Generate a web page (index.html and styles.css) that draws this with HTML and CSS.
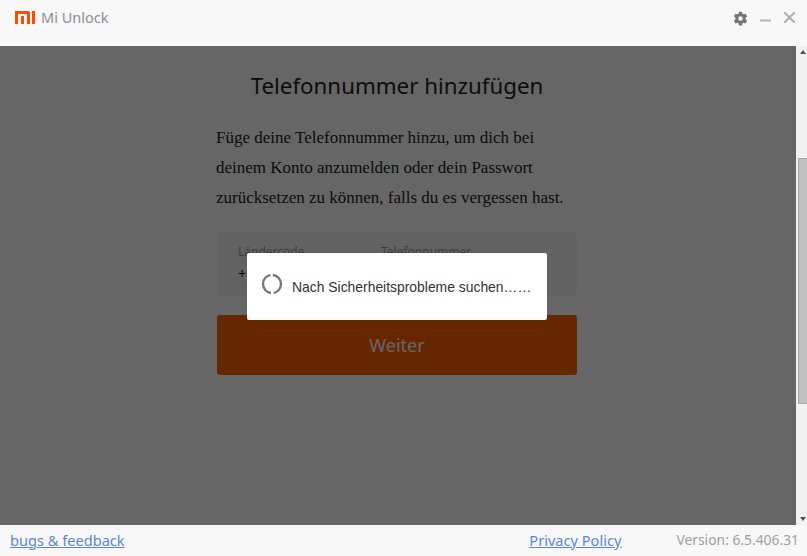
FILE: index.html
```html
<!DOCTYPE html>
<html lang="de">
<head>
    <meta charset="UTF-8">
    <meta name="viewport" content="width=device-width, initial-scale=1.0">
    <title>Mi Unlock</title>
    <link rel="stylesheet" href="styles.css">
</head>
<body>
    <header class="title-bar">
        <div class="brand">
            <svg class="mi-logo" width="20" height="13" viewBox="0 0 20 13">
                <path fill="#ff4a00" d="M0 0h13q2 0 2 2v11h-3V3H3v10H0zM6 5h3v8H6zM17 0h3v13h-3z"/>
            </svg>
            <span class="app-name">Mi Unlock</span>
        </div>
        <div class="window-buttons">
            <svg width="15" height="15" viewBox="0 0 24 24">
                <path fill="#757575" fill-rule="evenodd" d="M9.500 1h5l.7 3.300 1.700 1 3.200-1.100 2.500 4.300-2.500 2.300v2.400l2.500 2.300-2.500 4.300-3.200-1.100-1.700 1-.7 3.300h-5l-.7-3.300-1.700-1-3.200 1.100-2.500-4.300 2.500-2.300v-2.400L1.600 8.500l2.500-4.300 3.200 1.100 1.700-1zM12 8.500a3.500 3.500 0 1 0 0 7 3.500 3.500 0 0 0 0-7z"/>
            </svg>
            <svg width="11" height="11" viewBox="0 0 11 11">
                <path fill="#b4b4b4" d="M0 8.500h11v2H0z"/>
            </svg>
            <svg width="11" height="11" viewBox="0 0 11 11">
                <path stroke="#b0b0b0" stroke-width="2" d="M0 0l11 11M11 0L0 11"/>
            </svg>
        </div>
    </header>

    <div class="middle">
        <main class="content">
            <div class="form-column">
                <h1>Telefonnummer hinzufügen</h1>
                <p class="intro">Füge deine Telefonnummer hinzu, um dich bei deinem Konto anzumelden oder dein Passwort zurücksetzen zu können, falls du es vergessen hast.</p>
                <div class="phone-box">
                    <div class="country-field">
                        <label>Ländercode</label>
                        <span class="dial-code">+</span>
                    </div>
                    <div class="number-field">
                        <label>Telefonnummer</label>
                    </div>
                </div>
                <button class="next-button">Weiter</button>
            </div>
        </main>

        <div class="scrollbar">
            <span class="arrow-up"></span>
            <div class="track">
                <div class="thumb"></div>
            </div>
            <span class="arrow-down"></span>
        </div>

        <div class="overlay">
            <div class="dialog">
                <svg class="spinner" width="22" height="22" viewBox="0 0 22 22">
                    <circle cx="11" cy="11" r="9" fill="none" stroke="#777" stroke-width="2.400" stroke-dasharray="25.600 2.700" transform="rotate(-85 11 11)"/>
                </svg>
                <span>Nach Sicherheitsprobleme suchen……</span>
            </div>
        </div>
    </div>

    <footer class="status-bar">
        <a href="#">bugs &amp; feedback</a>
        <div class="footer-right">
            <a href="#">Privacy Policy</a>
            <span class="version">Version: 6.5.406.31</span>
        </div>
    </footer>
</body>
</html>
```

FILE: styles.css
```css
html, body {
    height: 100%;
}

body {
    margin: 0;
    height: 556px;
    display: flex;
    flex-direction: column;
    overflow: hidden;
    font-family: "Noto Sans", "Open Sans", Arial, sans-serif;
    background-color: #f8f8f8;
}

.title-bar {
    height: 46px;
    flex: none;
    display: flex;
    justify-content: space-between;
    padding: 11px 12px 0 15px;
    box-sizing: border-box;
    background-color: #f8f8f8;
}
.brand {
    display: flex;
    align-items: flex-start;
    gap: 6px;
}
.app-name {
    font-size: 14.500px;
    line-height: 13px;
    color: #8a8f98;
}
.window-buttons {
    display: flex;
    align-items: flex-start;
    gap: 13px;
}
.window-buttons svg:first-child {
    margin-right: -1px;
}
.window-buttons svg:last-child {
    margin-top: 1px;
}

.middle {
    position: relative;
    flex: 1;
    display: flex;
    min-height: 0;
}
.content {
    flex: 1;
    background-color: #fff;
    display: flex;
    justify-content: center;
}
.form-column {
    width: 360px;
    margin-right: 2px;
}
h1 {
    margin: 25px 0 0;
    font-size: 22.300px;
    line-height: 30px;
    font-weight: 400;
    color: #222;
    text-align: center;
}
.intro {
    margin: 22px 0 0 -1px;
    font-family: "Liberation Serif", "Times New Roman", serif;
    font-size: 17px;
    line-height: 30px;
    color: #222;
}
.phone-box {
    margin: 20px 0 0 1px;
    height: 62px;
    display: flex;
    box-sizing: border-box;
    padding: 11px 20px;
    background-color: #f4f4f4;
    border-radius: 3px;
}
.country-field {
    width: 143px;
}
label {
    display: block;
    font-size: 12px;
    line-height: 16px;
    color: #999;
}
.dial-code {
    display: block;
    margin-top: 6px;
    font-size: 14px;
    line-height: 16px;
    color: #111;
}
.next-button {
    display: block;
    width: 360px;
    height: 60px;
    margin-top: 20px;
    border: none;
    border-radius: 3px;
    background-color: #ff6200;
    color: #fff;
    font-family: inherit;
    font-size: 18px;
}

.scrollbar {
    width: 11px;
    flex: none;
    display: flex;
    flex-direction: column;
    align-items: center;
    background-color: #f1f1f1;
    z-index: 1;
}
.track {
    flex: 1;
    width: 100%;
    padding-top: 104px;
    box-sizing: border-box;
}
.thumb {
    height: 246px;
    margin-left: 2px;
    box-sizing: border-box;
    background-color: #c0c0c0;
    border: 1px solid #a8a8a8;
    border-right: none;
}
.arrow-up, .arrow-down {
    width: 0;
    height: 0;
    flex: none;
    margin-left: 2px;
    border-left: 3.500px solid transparent;
    border-right: 3.500px solid transparent;
}
.arrow-up {
    margin-top: 4px;
    border-bottom: 4px solid #505050;
}
.arrow-down {
    margin-bottom: 4px;
    border-top: 4px solid #505050;
}

.overlay {
    position: absolute;
    top: 0;
    left: 0;
    right: 11px;
    bottom: 0;
    display: flex;
    align-items: center;
    justify-content: center;
    padding: 2px 2px 0 0;
    background-color: rgba(0, 0, 0, 0.6);
}
.dialog {
    width: 300px;
    height: 67px;
    display: flex;
    align-items: center;
    gap: 9px;
    box-sizing: border-box;
    padding: 0 0 0 14px;
    background-color: #fff;
    border-radius: 2px;
    font-family: "Liberation Sans", Arial, sans-serif;
    font-size: 13.900px;
    color: #333;
}
.spinner {
    flex: none;
    margin-top: -5px;
}

.status-bar {
    height: 31px;
    flex: none;
    display: flex;
    justify-content: space-between;
    align-items: center;
    padding: 0 8px 2px 10px;
    box-sizing: border-box;
    background-color: #f8f8f8;
    font-size: 14.600px;
}
.status-bar a {
    color: #5b86e5;
}
.footer-right {
    display: flex;
    gap: 55px;
}
.version {
    font-size: 13.850px;
    line-height: 20px;
    color: #a0a0a0;
}
```
